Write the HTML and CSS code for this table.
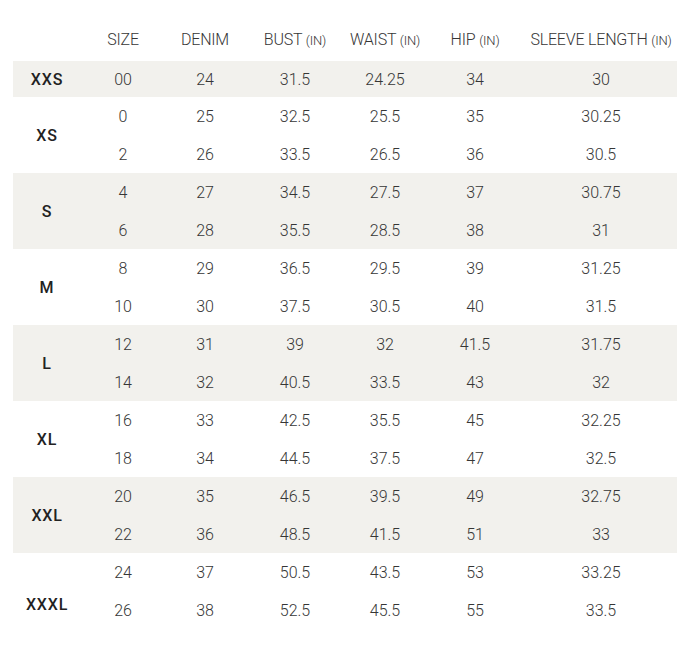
FILE: index.html
```html
<!DOCTYPE html>
<html lang="en">
<head>
  <meta charset="UTF-8">
  <title>Size Chart</title>
  <link rel="stylesheet" href="styles.css">
</head>
<body>
<div class="chart">
  <table class="size-table">
    <colgroup>
      <col class="c-label">
      <col class="c-size">
      <col class="c-denim">
      <col class="c-bust">
      <col class="c-waist">
      <col class="c-hip">
      <col class="c-sleeve">
    </colgroup>
    <thead>
      <tr>
        <th></th>
        <th>SIZE</th>
        <th>DENIM</th>
        <th>BUST <span class="unit">(IN)</span></th>
        <th>WAIST <span class="unit">(IN)</span></th>
        <th>HIP <span class="unit">(IN)</span></th>
        <th>SLEEVE LENGTH <span class="unit">(IN)</span></th>
      </tr>
    </thead>
    <tbody class="band">
      <tr class="single">
        <td class="label">XXS</td><td>00</td><td>24</td><td>31.5</td><td>24.25</td><td>34</td><td>30</td>
      </tr>
    </tbody>
    <tbody>
      <tr>
        <td class="label" rowspan="2">XS</td><td>0</td><td>25</td><td>32.5</td><td>25.5</td><td>35</td><td>30.25</td>
      </tr>
      <tr>
        <td>2</td><td>26</td><td>33.5</td><td>26.5</td><td>36</td><td>30.5</td>
      </tr>
    </tbody>
    <tbody class="band">
      <tr>
        <td class="label" rowspan="2">S</td><td>4</td><td>27</td><td>34.5</td><td>27.5</td><td>37</td><td>30.75</td>
      </tr>
      <tr>
        <td>6</td><td>28</td><td>35.5</td><td>28.5</td><td>38</td><td>31</td>
      </tr>
    </tbody>
    <tbody>
      <tr>
        <td class="label" rowspan="2">M</td><td>8</td><td>29</td><td>36.5</td><td>29.5</td><td>39</td><td>31.25</td>
      </tr>
      <tr>
        <td>10</td><td>30</td><td>37.5</td><td>30.5</td><td>40</td><td>31.5</td>
      </tr>
    </tbody>
    <tbody class="band">
      <tr>
        <td class="label" rowspan="2">L</td><td>12</td><td>31</td><td>39</td><td>32</td><td>41.5</td><td>31.75</td>
      </tr>
      <tr>
        <td>14</td><td>32</td><td>40.5</td><td>33.5</td><td>43</td><td>32</td>
      </tr>
    </tbody>
    <tbody>
      <tr>
        <td class="label" rowspan="2">XL</td><td>16</td><td>33</td><td>42.5</td><td>35.5</td><td>45</td><td>32.25</td>
      </tr>
      <tr>
        <td>18</td><td>34</td><td>44.5</td><td>37.5</td><td>47</td><td>32.5</td>
      </tr>
    </tbody>
    <tbody class="band">
      <tr>
        <td class="label" rowspan="2">XXL</td><td>20</td><td>35</td><td>46.5</td><td>39.5</td><td>49</td><td>32.75</td>
      </tr>
      <tr>
        <td>22</td><td>36</td><td>48.5</td><td>41.5</td><td>51</td><td>33</td>
      </tr>
    </tbody>
    <tbody>
      <tr>
        <td class="label low" rowspan="2">XXXL</td><td>24</td><td>37</td><td>50.5</td><td>43.5</td><td>53</td><td>33.25</td>
      </tr>
      <tr>
        <td>26</td><td>38</td><td>52.5</td><td>45.5</td><td>55</td><td>33.5</td>
      </tr>
    </tbody>
  </table>
</div>
</body>
</html>
```

FILE: styles.css
```css
body {
  margin: 0;
  padding: 0;
  background: #fff;
  font-family: Roboto, "Liberation Sans", sans-serif;
  color: #333;
}

.chart {
  padding: 17px 0 0 13px;
}

.size-table {
  border-collapse: collapse;
  table-layout: fixed;
  width: 664px;
}

.c-label { width: 68px; }
.c-size { width: 84px; }
.c-denim { width: 80px; }
.c-bust { width: 100px; }
.c-waist { width: 80px; }
.c-hip { width: 100px; }
.c-sleeve { width: 152px; }

.size-table th,
.size-table td {
  padding: 0;
  text-align: center;
  vertical-align: middle;
  font-size: 16px;
  font-weight: 300;
  color: #363636;
}

.size-table thead th {
  height: 44px;
  letter-spacing: -0.2px;
}

.unit {
  font-size: 13px;
  color: #363636;
}

.size-table td {
  height: 38px;
}

.size-table tr.single td {
  height: 36px;
}

.band tr {
  background: #f2f1ed;
}

.size-table td.label {
  font-weight: 500;
  color: #222;
  letter-spacing: 0.8px;
}

.size-table td.low {
  padding-top: 26px;
}
```
